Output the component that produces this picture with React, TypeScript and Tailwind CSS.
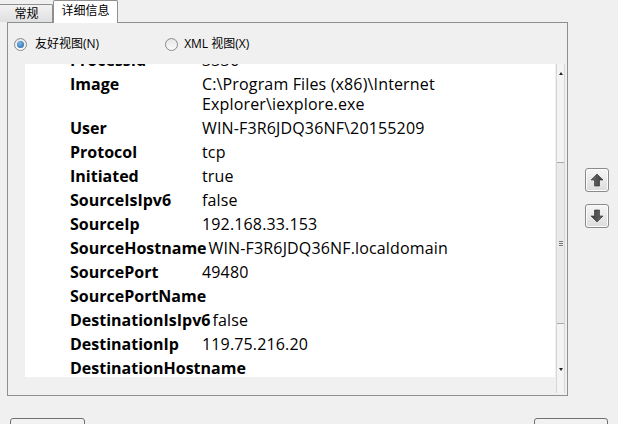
import React from "react"

const rows: { k: string; v: string }[] = [
    { k: "ProcessId", v: "3336" },
    { k: "Image", v: "C:\\Program Files (x86)\\Internet Explorer\\iexplore.exe" },
    { k: "User", v: "WIN-F3R6JDQ36NF\\20155209" },
    { k: "Protocol", v: "tcp" },
    { k: "Initiated", v: "true" },
    { k: "SourceIsIpv6", v: "false" },
    { k: "SourceIp", v: "192.168.33.153" },
    { k: "SourceHostname", v: "WIN-F3R6JDQ36NF.localdomain" },
    { k: "SourcePort", v: "49480" },
    { k: "SourcePortName", v: "" },
    { k: "DestinationIsIpv6", v: "false" },
    { k: "DestinationIp", v: "119.75.216.20" },
    { k: "DestinationHostname", v: "" },
]

function Radio({ checked }: { checked?: boolean }) {
    return (
        <span className="flex h-[13px] w-[13px] items-center justify-center rounded-full border border-[#8a8a8a] bg-gradient-to-b from-[#e6e6e6] to-[#fafafa]">
            {checked && <span className="h-[7px] w-[7px] rounded-full bg-[radial-gradient(circle_at_40%_35%,#7db8e8,#1d5fa0)]" />}
        </span>
    )
}

function ArrowButton({ down }: { down?: boolean }) {
    return (
        <div className="flex h-[24px] w-[24px] items-center justify-center rounded-[3px] border border-[#8a8a8a] bg-gradient-to-b from-[#f6f6f6] to-[#dcdcdc] shadow-[inset_0_0_0_1px_#fcfcfc]">
            <svg width="14" height="14" viewBox="0 0 14 14" className={down ? "rotate-180" : ""}>
                <defs>
                    <linearGradient id={down ? "ad" : "au"} x1="0" y1="0" x2="1" y2="0">
                        <stop offset="0" stopColor="#6b6b6b" />
                        <stop offset="1" stopColor="#3c3c3c" />
                    </linearGradient>
                </defs>
                <path d="M7 1 L13 7 L9.5 7 L9.5 13 L4.5 13 L4.5 7 L1 7 Z" fill={`url(#${down ? "ad" : "au"})`} stroke="#2e2e2e" strokeWidth="0.6" />
            </svg>
        </div>
    )
}

export default function App() {
    return (
        <div className="relative h-[424px] w-[618px] overflow-hidden bg-[#f0f0f0] font-['Open_Sans','Noto_Sans_CJK_SC',sans-serif] text-black">
            {/* tabs */}
            <div className="flex h-[22px] items-end">
                <div className="ml-[-2px] flex h-[18px] w-[55px] items-center justify-center rounded-t-[2px] border border-b-0 border-[#8e8f8f] bg-gradient-to-b from-[#f2f2f2] to-[#e0e0e0] pl-[2px] text-[12px]">
                    常规
                </div>
                <div className="relative z-10 mb-[-1px] flex h-[23px] w-[65px] items-center justify-center rounded-t-[2px] border border-b-0 border-[#8e8f8f] bg-white pb-[2px] text-[12px]">
                    详细信息
                </div>
            </div>

            {/* tab panel */}
            <div className="ml-[7px] h-[374px] w-[561px] border border-[#8e8f8f] bg-[#f0f0f0]">
                <div className="mt-[12px] flex h-[18px] items-center text-[12px]">
                    <div className="ml-[6px] flex items-center gap-[8px]">
                        <Radio checked />
                        <span>友好视图(N)</span>
                    </div>
                    <div className="ml-[66px] flex items-center gap-[6px]">
                        <Radio />
                        <span>XML 视图(X)</span>
                    </div>
                </div>

                <div className="mt-[11px] ml-[17px] flex items-start">
                    <div className="h-[313px] w-[530px] overflow-hidden bg-white">
                        <div className="mt-[-16px] pl-[45px] text-[16px]">
                            {rows.map((r) => (
                                <div key={r.k} className="flex py-[2px] leading-[20px]">
                                    <span className="min-w-[132px] shrink-0 pr-[2px] font-bold">{r.k}</span>
                                    <span className="max-w-[320px] tracking-[0.15px]">{r.v}</span>
                                </div>
                            ))}
                        </div>
                    </div>
                    {/* scrollbar */}
                    <div className="ml-[1px] flex h-[329px] w-[9px] flex-col border-x border-[#d6d6d6] bg-[#f4f4f4]">
                        <div className="flex h-[18px] items-center justify-center">
                            <div className="h-0 w-0 border-x-[2px] border-b-[3px] border-x-transparent border-b-[#222]" />
                        </div>
                        <div className="mt-[80px] flex h-[162px] items-center justify-center border-y border-[#a8a8a8] bg-[#eaeaea]">
                            <div className="flex flex-col gap-[1px]">
                                <div className="h-[1px] w-[4px] bg-[#777]" />
                                <div className="h-[1px] w-[4px] bg-[#777]" />
                                <div className="h-[1px] w-[4px] bg-[#777]" />
                            </div>
                        </div>
                        <div className="mt-[40px] flex h-[10px] items-center justify-center">
                            <div className="h-0 w-0 border-x-[2px] border-t-[3px] border-x-transparent border-t-[#222]" />
                        </div>
                    </div>
                </div>
            </div>

            {/* side arrow buttons */}
            <div className="absolute left-[585px] top-[168px] flex flex-col gap-[12px]">
                <ArrowButton />
                <ArrowButton down />
            </div>

            {/* bottom buttons */}
            <div className="mt-[22px] flex justify-between px-[10px]">
                <div className="h-[24px] w-[75px] rounded-[3px] border border-[#707070] bg-gradient-to-b from-[#f2f2f2] to-[#ebebeb]" />
                <div className="h-[24px] w-[74px] rounded-[3px] border border-[#707070] bg-gradient-to-b from-[#f2f2f2] to-[#ebebeb]" />
            </div>
        </div>
    )
}
